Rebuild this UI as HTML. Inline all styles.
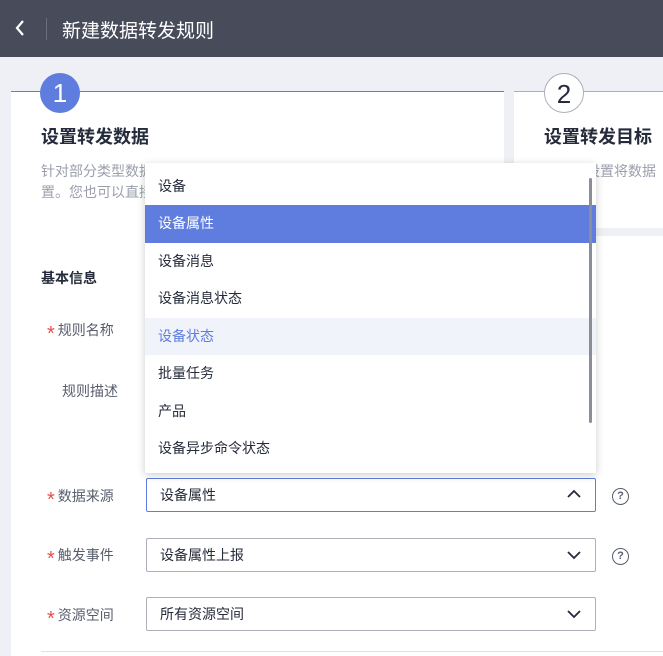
<!DOCTYPE html>
<html><head><meta charset="utf-8"><style>
*{margin:0;padding:0;box-sizing:border-box}
body{width:663px;height:656px;overflow:hidden;background:#eef0f5;font-family:"Liberation Sans","Noto Sans CJK SC",sans-serif;position:relative;font-size:14px;color:#252b3a}
.hdr{position:absolute;left:0;top:0;width:663px;height:57px;background:#484c5a;color:#fff}
.hdr .t{position:absolute;left:62px;top:16px;font-size:19px}
.hdr .sep{position:absolute;left:46px;top:18px;width:1px;height:22px;background:#6b6f7c}
.card{position:absolute;background:#fff}
.circ{position:absolute;width:40px;height:40px;border-radius:50%;text-align:center;line-height:40px;font-size:26px}
.abs{position:absolute;white-space:nowrap}
.lbl{position:absolute;left:47px;font-size:14px;color:#575d6c}
.lbl b{color:#e84c4c;font-weight:normal;margin-right:3px;font-size:20px;vertical-align:-5px;line-height:14px}
.inp{position:absolute;left:146px;width:450px;height:34px;border:1px solid #adb0b8;border-radius:2px;background:#fff;padding-left:13px;line-height:32px;font-size:14px}
.q{position:absolute;left:612px;width:17px;height:17px;border:1.5px solid #575d6c;border-radius:50%;font-size:11px;text-align:center;line-height:14px;color:#575d6c;font-weight:bold}
.dd{position:absolute;left:145px;top:163px;width:451px;height:310px;background:#fff;box-shadow:0 2px 8px rgba(0,0,0,.2)}
.it{height:37.5px;line-height:37.5px;padding-left:13px;font-size:14px;color:#252b3a}
</style></head><body>
<div class="hdr"><svg class="abs" style="left:14px;top:19px" width="12" height="18"><path d="M9 2 L3 9 L9 16" stroke="#fff" stroke-width="2.2" fill="none"/></svg><div class="sep"></div><div class="t">新建数据转发规则</div></div>
<div class="card" style="left:11px;top:91px;width:493px;height:150px;border-top:1px solid #5f7ddf"></div>
<div class="card" style="left:514px;top:91px;width:149px;height:137px;border-top:1px solid #adb0b8"></div>
<div class="card" style="left:11px;top:236px;width:652px;height:420px"></div>
<div class="circ" style="left:40px;top:73px;background:#5f7ddf;color:#fff">1</div>
<div class="circ" style="left:544px;top:73px;background:#fff;border:1px solid #adb0b8;color:#252b3a">2</div>
<div class="abs" style="left:41px;top:123px;font-size:18px;font-weight:bold">设置转发数据</div>
<div class="abs" style="left:544px;top:123px;font-size:18px;font-weight:bold">设置转发目标</div>
<div class="abs" style="left:41px;top:161px;color:#9a9fab;font-size:14px;line-height:21px">针对部分类型数据设置转发数据，将数据转发到相关设置<br>置。您也可以直接设置转发数据</div>
<div class="abs" style="left:544px;top:161px;color:#9a9fab">您可以设置将数据</div>
<div class="abs" style="left:41px;top:268px;font-weight:bold;font-size:14px">基本信息</div>
<div class="lbl" style="top:320px"><b>*</b>规则名称</div>
<div class="lbl" style="top:381px;left:62px">规则描述</div>
<div class="inp" style="top:313px"></div>
<div class="inp" style="top:374px;height:76px"></div>
<div class="lbl" style="top:486px"><b>*</b>数据来源</div>
<div class="lbl" style="top:545px"><b>*</b>触发事件</div>
<div class="lbl" style="top:605px"><b>*</b>资源空间</div>
<div class="inp" style="top:478px;border-color:#5f7ddf">设备属性<svg class="abs" style="left:420px;top:10px" width="14" height="10"><path d="M1 8 L7 2 L13 8" stroke="#252b3a" stroke-width="1.8" fill="none"/></svg></div>
<div class="inp" style="top:538px">设备属性上报<svg class="abs" style="left:420px;top:11px" width="14" height="10"><path d="M1 2 L7 8 L13 2" stroke="#252b3a" stroke-width="1.8" fill="none"/></svg></div>
<div class="inp" style="top:597px">所有资源空间<svg class="abs" style="left:420px;top:11px" width="14" height="10"><path d="M1 2 L7 8 L13 2" stroke="#252b3a" stroke-width="1.8" fill="none"/></svg></div>
<div class="q" style="top:488px">?</div>
<div class="q" style="top:548px">?</div>
<div class="abs" style="left:41px;top:651px;width:622px;height:1px;background:#dfe1e6"></div>
<div class="dd">
<div class="it" style="height:42px;line-height:46px">设备</div>
<div class="it" style="background:#5f7ddf;color:#fff">设备属性</div>
<div class="it">设备消息</div>
<div class="it">设备消息状态</div>
<div class="it" style="background:#f0f3fa;color:#5f7ddf">设备状态</div>
<div class="it">批量任务</div>
<div class="it">产品</div>
<div class="it">设备异步命令状态</div>
<div class="abs" style="left:444px;top:15px;width:3px;height:245px;background:#8a8e99;border-radius:2px"></div>
</div>
</body></html>
